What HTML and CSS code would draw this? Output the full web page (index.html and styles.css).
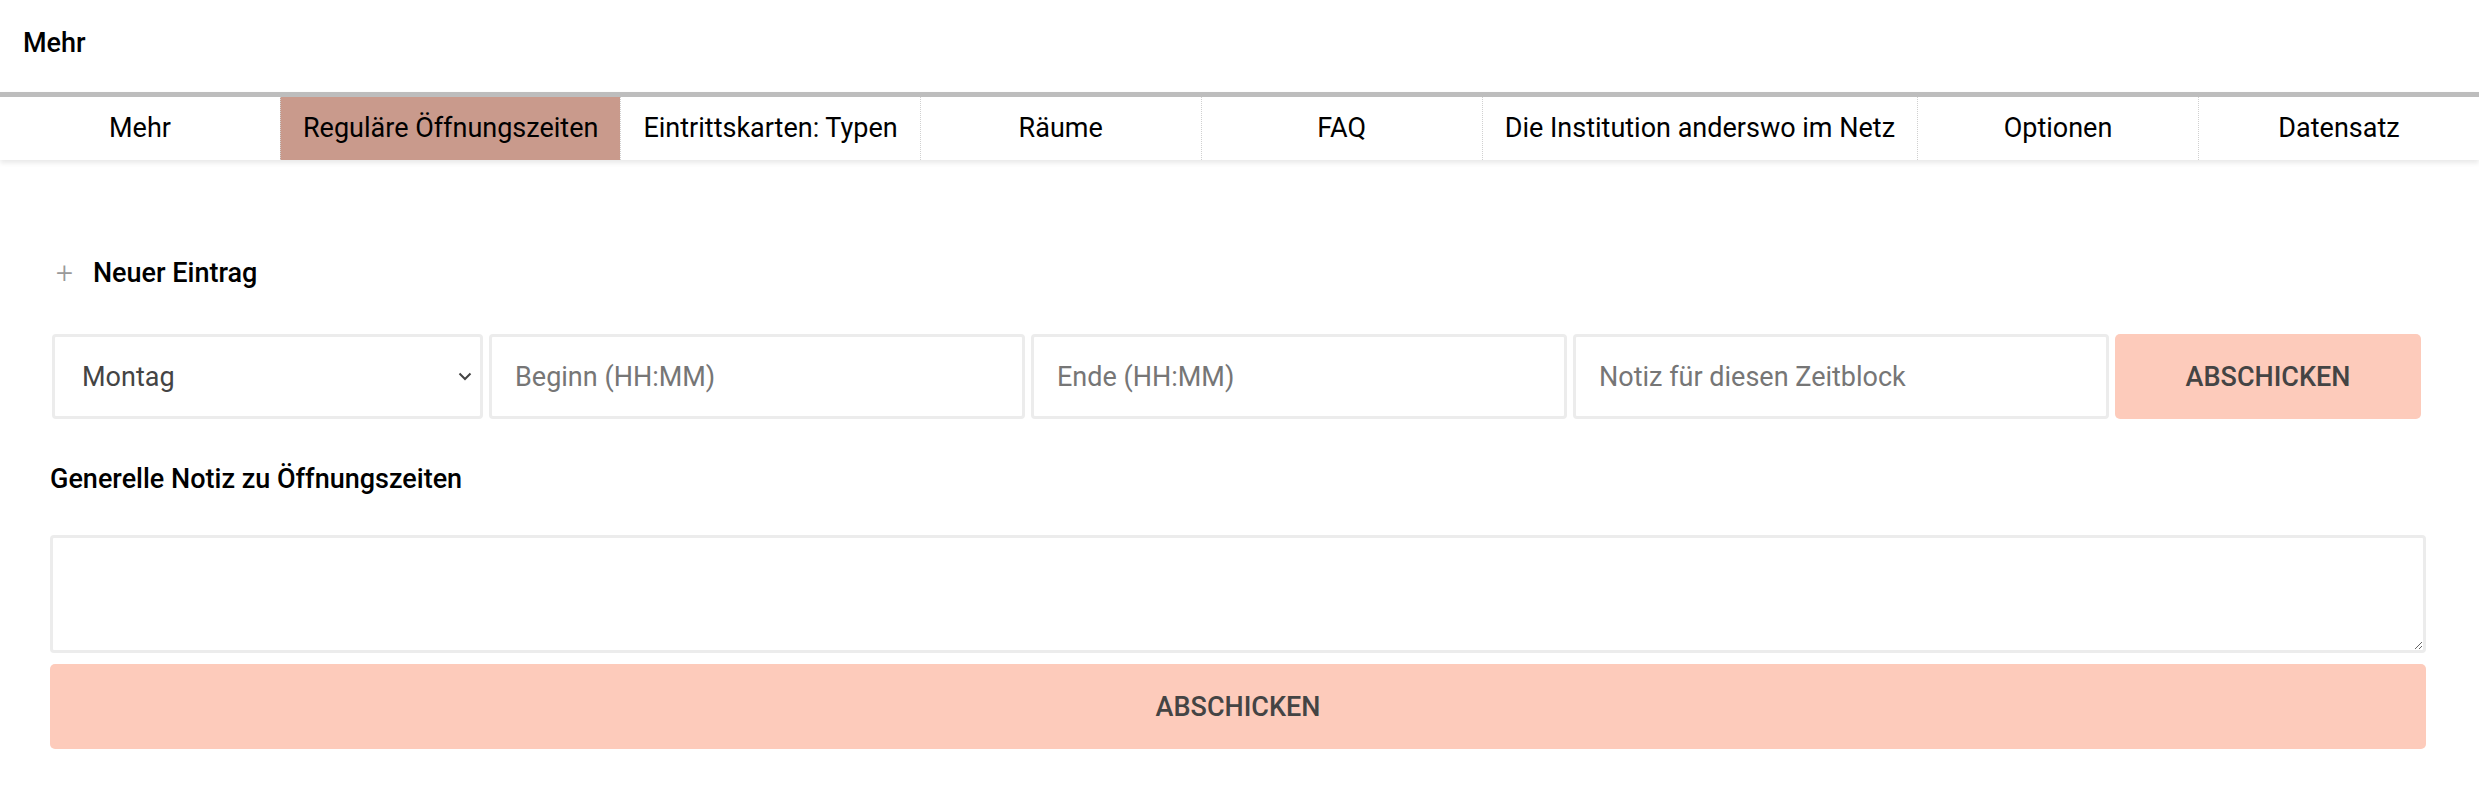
FILE: index.html
```html
<!DOCTYPE html>
<html lang="de">
<head>
<meta charset="utf-8">
<title>Mehr</title>
<link rel="stylesheet" href="styles.css">
</head>
<body>
<header class="page-title">Mehr</header>
<nav class="tabs">
  <a class="tab">Mehr</a>
  <a class="tab active">Reguläre Öffnungszeiten</a>
  <a class="tab">Eintrittskarten: Typen</a>
  <a class="tab">Räume</a>
  <a class="tab">FAQ</a>
  <a class="tab">Die Institution anderswo im Netz</a>
  <a class="tab">Optionen</a>
  <a class="tab">Datensatz</a>
</nav>
<main class="content">
  <div class="new-entry"><span class="plus">+</span><span class="new-label">Neuer Eintrag</span></div>
  <form class="entry-row">
    <div class="select-wrap">
      <select class="field select">
        <option>Montag</option>
        <option>Dienstag</option>
        <option>Mittwoch</option>
      </select>
      <svg class="chevron" width="14" height="9" viewBox="0 0 14 9" aria-hidden="true"><path d="M1.5 1.5 L7 7 L12.5 1.5" fill="none" stroke="#444" stroke-width="2"/></svg>
    </div>
    <input class="field" type="text" placeholder="Beginn (HH:MM)">
    <input class="field" type="text" placeholder="Ende (HH:MM)">
    <input class="field" type="text" placeholder="Notiz für diesen Zeitblock">
    <button class="btn" type="button">ABSCHICKEN</button>
  </form>
  <div class="note-label">Generelle Notiz zu Öffnungszeiten</div>
  <textarea class="note"></textarea>
  <button class="btn btn-wide" type="button">ABSCHICKEN</button>
</main>
</body>
</html>
```
FILE: styles.css
```css
html, body {
  margin: 0;
  padding: 0;
  background: #fff;
}
body {
  font-family: Roboto, "Noto Sans", sans-serif;
  color: #000;
}
.page-title {
  height: 92px;
  box-sizing: border-box;
  padding: 27px 0 0 23px;
  font-size: 27px;
  line-height: 32px;
  font-weight: 500;
}
.tabs {
  display: flex;
  border-top: 5px solid #bdbdbd;
  box-shadow: 0 3px 5px rgba(0, 0, 0, 0.09);
  height: 63px;
}
.tab {
  flex: 1 1 0;
  padding: 0 22px;
  white-space: nowrap;
  text-align: center;
  font-size: 27px;
  line-height: 63px;
  color: #000;
  border-left: 1px dotted #d0d0d0;
}
.tab:first-child {
  border-left: none;
}
.tab.active {
  background: #c99a8c;
}
.content {
  padding: 97px 53px 40px 50px;
}
.new-entry {
  display: flex;
  align-items: center;
  gap: 20px;
  padding-left: 6px;
  height: 32px;
}
.plus {
  font-size: 30px;
  font-weight: 300;
  color: #9a9a9a;
  line-height: 32px;
}
.new-label {
  font-size: 27px;
  font-weight: 500;
  line-height: 32px;
}
.entry-row {
  display: grid;
  grid-template-columns: 431fr 536fr 536fr 536fr 306fr;
  gap: 6px;
  margin: 45px 5px 0 2px;
  height: 85px;
}
.select-wrap {
  position: relative;
  min-width: 0;
}
.field {
  box-sizing: border-box;
  height: 85px;
  border: 3px solid #ececec;
  border-radius: 4px;
  background: #fff;
  font-family: Roboto, "Noto Sans", sans-serif;
  font-size: 27px;
  color: #444;
  padding: 0 23px;
  outline: none;
  min-width: 0;
}
.field::placeholder {
  color: #767676;
}
.select {
  width: 100%;
  appearance: none;
  -webkit-appearance: none;
  padding-left: 27px;
  padding-right: 40px;
}
.chevron {
  position: absolute;
  right: 11px;
  top: 38px;
  pointer-events: none;
}
.btn {
  border: none;
  border-radius: 5px;
  background: #fdcbbb;
  color: #444;
  font-family: Roboto, "Noto Sans", sans-serif;
  font-size: 27px;
  font-weight: 500;
  height: 85px;
  cursor: pointer;
}
.note-label {
  margin-top: 44px;
  font-size: 27px;
  font-weight: 500;
  line-height: 32px;
}
.note {
  display: block;
  box-sizing: border-box;
  width: 100%;
  height: 118px;
  margin-top: 40px;
  border: 3px solid #ececec;
  border-radius: 4px;
  font-family: Roboto, "Noto Sans", sans-serif;
  font-size: 27px;
  outline: none;
}
.btn-wide {
  display: block;
  width: 100%;
  margin-top: 11px;
}
```
